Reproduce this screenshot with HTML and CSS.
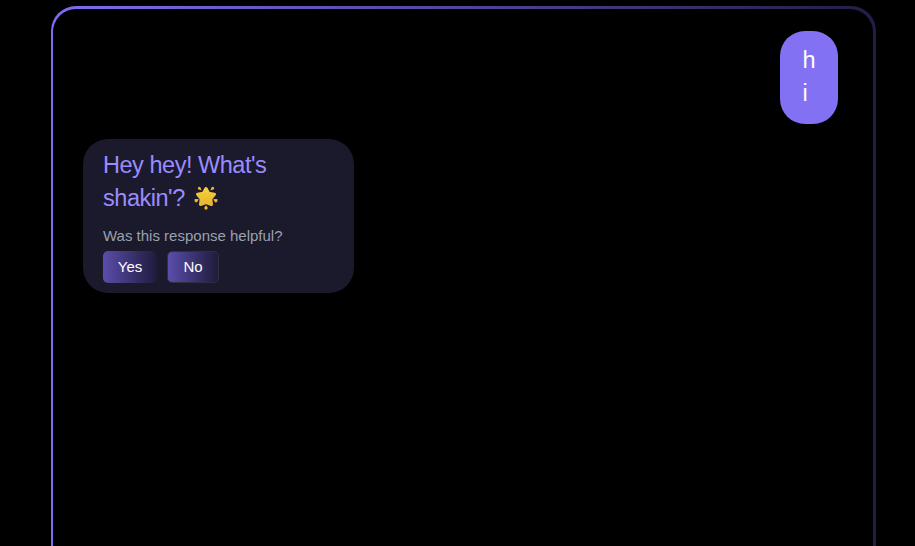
FILE: index.html
```html
<!DOCTYPE html>
<html lang="en">
<head>
<meta charset="utf-8">
<title>Chat</title>
<link rel="stylesheet" href="styles.css">
</head>
<body>
<main class="frame">
  <section class="chat">
    <div class="message user"><span>h</span><span>i</span></div>
    <div class="message bot">
      <p class="reply">Hey hey! What's<br>shakin'? <svg class="star" viewBox="0 0 24 24" aria-label="glowing star">
        <defs><linearGradient id="gold" x1="0" y1="0" x2="0" y2="1"><stop offset="0" stop-color="#f6cf3a"/><stop offset="1" stop-color="#e6b733"/></linearGradient></defs>
        <path d="M12 2.6 14.6 7.3 20.4 8.3 16.7 12.8 17.4 18.4 12 16.6 6.6 18.4 7.3 12.8 3.6 8.3 9.4 7.3Z" fill="url(#gold)" stroke="url(#gold)" stroke-width="3.2" stroke-linejoin="round"/>
        <g fill="#eeb92f">
          <path d="M4 1.5Q5.5 .2 6.5 1.5L7.6 4.4 4.6 3.6Q3.4 2.8 4 1.5ZM20 1.5Q18.5 .2 17.5 1.5L16.4 4.4 19.4 3.6Q20.6 2.8 20 1.5Z"/>
          <path d="M.5 13.3Q1 12.7 4.8 13.2L3.2 16Q1.8 17 .7 15.6ZM23.5 13.3Q23 12.7 19.2 13.2L20.8 16Q22.2 17 23.3 15.6Z"/>
          <path d="M12 19.2 13.8 21.8Q13.6 23.7 12 23.7T10.2 21.8Z"/>
        </g>
      </svg></p>
      <p class="question">Was this response helpful?</p>
      <div class="actions"><button class="yes">Yes</button><button class="no">No</button></div>
    </div>
  </section>
</main>
</body>
</html>
```
FILE: styles.css
```css
* { box-sizing: border-box; }
body {
  margin: 0;
  padding: 6px 0 0 51px;
  height: 546px;
  overflow: hidden;
  background: #000;
  font-family: "Liberation Sans", Arial, sans-serif;
}
.frame {
  width: 825px;
  height: 540px;
  padding: 3px 3px 0 2px;
  border-radius: 25px 25px 0 0;
  background: linear-gradient(90deg, #7f6df2, #211e45);
}
.chat {
  display: flex;
  flex-direction: column;
  gap: 15px;
  height: 100%;
  padding: 22px 35px 0 30px;
  border-radius: 23px 23px 0 0;
  background: #000;
}
.message { border-radius: 25px; font-size: 23.5px; line-height: 33px; }
.user {
  display: flex;
  flex-direction: column;
  align-self: flex-end;
  width: 58px;
  height: 93px;
  padding: 13px 22px 0 22.5px;
  background: #8371f3;
  color: #fff;
}
.bot {
  width: 271px;
  height: 154px;
  padding: 10px 20px;
  background: #1b192c;
}
p { margin: 0; }
.reply { height: 66px; color: #9a8cff; letter-spacing: -0.47px; white-space: nowrap; }
.star { width: 24px; height: 24px; margin-left: 3.5px; vertical-align: -4px; }
.question { margin-top: 12px; color: #99a1ae; font-size: 15px; line-height: 18px; }
.actions { display: flex; gap: 10px; margin-top: 6px; }
button {
  height: 32px;
  padding: 0;
  border: 0;
  border-radius: 5px;
  background: linear-gradient(90deg, #5b4dab, #1e1b3b);
  color: #fff;
  font: 15px/32px "Liberation Sans", Arial, sans-serif;
}
.yes { width: 54px; }
.no { width: 52px; border: 1px solid #302e40; line-height: 30px; }
```
